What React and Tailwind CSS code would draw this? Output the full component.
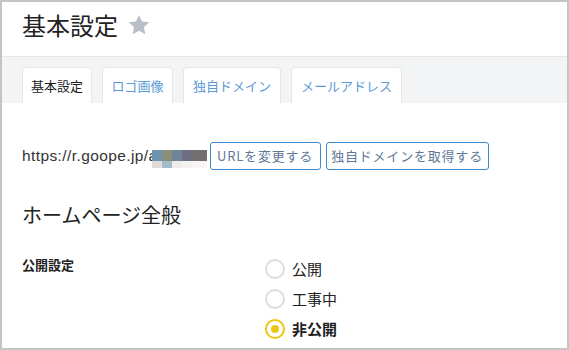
import React from 'react';

const tabs = [
  { label: '基本設定', w: 'w-[70px]', active: true },
  { label: 'ロゴ画像', w: 'w-[71px]' },
  { label: '独自ドメイン', w: 'w-[98px]' },
  { label: 'メールアドレス', w: 'w-[111px]' },
];

const Radio = ({ label, checked }) => (
  <label className="flex items-center h-[30px] gap-[7px]">
    <span
      className={
        checked
          ? 'w-[20px] h-[20px] rounded-full border-2 border-[#edc613] flex items-center justify-center'
          : 'w-[20px] h-[20px] rounded-full border-2 border-[#d9dde3]'
      }
    >
      {checked && <span className="w-[8px] h-[8px] rounded-full bg-[#edc613]" />}
    </span>
    <span className={checked ? 'text-[15px] font-bold text-[#222]' : 'text-[15px] text-[#222]'}>
      {label}
    </span>
  </label>
);

const Mosaic = () => (
  <span className="inline-flex flex-col -ml-[6px] mt-[6px]">
    <span className="flex h-[11px]">
      <span className="w-[10px] bg-[#6c93b0]" />
      <span className="w-[10px] bg-[#8a8f7a]" />
      <span className="w-[10px] bg-[#6f8499]" />
      <span className="w-[10px] bg-[#6f6f82]" />
      <span className="w-[15px] bg-[#736f6f]" />
    </span>
    <span className="flex h-[7px]">
      <span className="w-[10px] bg-[#e0dcd8]" />
      <span className="w-[10px] bg-[#a5bccb]" />
      <span className="w-[10px] bg-[#f0ece8]" />
      <span className="w-[10px] bg-[#f4f2f0]" />
      <span className="w-[15px] bg-[#f8f6f4]" />
    </span>
  </span>
);

export default function App() {
  return (
    <div
      className="w-[569px] h-[350px] border-2 border-[#c4c4c4] bg-white overflow-hidden text-[#222]"
      style={{ fontFamily: '"Noto Sans CJK JP", "Liberation Sans", sans-serif' }}
    >
      {/* header */}
      <div className="h-[55px] flex items-start pt-[10px] px-[20px] gap-[10px] border-b border-[#e8e6de]">
        <h1 className="text-[24px] leading-[26px] text-[#222]">基本設定</h1>
        <svg width="22" height="22" viewBox="0 0 24 24" className="mt-[2px]">
          <path
            d="M12 1l3.3 7.2 7.9.8-5.9 5.4 1.7 7.8L12 18.2 5 22.2l1.7-7.8L.8 9l7.9-.8z"
            fill="#b9bfc9"
          />
        </svg>
      </div>

      {/* tabs */}
      <div className="h-[46px] bg-[#f3f4f6] flex items-end gap-[10px] px-[20px]">
        {tabs.map((t) => (
          <div
            key={t.label}
            className={`${t.w} h-[36px] bg-white border border-b-0 border-[#e6e6e2] rounded-t-[4px] flex items-center justify-center text-[13px] ${
              t.active ? 'text-[#222]' : 'text-[#5a9ad6]'
            }`}
          >
            {t.label}
          </div>
        ))}
      </div>

      {/* body */}
      <div className="px-[20px] pt-[39px]">
        <div className="flex items-center h-[28px]">
          <span
            className="text-[15.5px] tracking-[0.4px] text-[#333]"
            style={{ fontFamily: '"Liberation Sans", sans-serif' }}
          >
            https://r.goope.jp/a
          </span>
          <Mosaic />
          <button className="ml-[3px] w-[111px] h-[28px] border border-[#3d8bd0] rounded-[3px] text-[13px] text-[#62789a] tracking-[0.8px]">
            URLを変更する
          </button>
          <button className="ml-[5px] w-[163px] h-[28px] border border-[#3d8bd0] rounded-[3px] text-[13px] text-[#62789a] tracking-[0.8px]">
            独自ドメインを取得する
          </button>
        </div>

        <h2 className="mt-[32px] text-[20px] leading-[26px] text-[#222]">ホームページ全般</h2>

        <div className="mt-[26px] flex">
          <div className="w-[243px] text-[13px] font-bold pt-[1px]">公開設定</div>
          <div className="flex flex-col mt-[0px]">
            <Radio label="公開" />
            <Radio label="工事中" />
            <Radio label="非公開" checked />
          </div>
        </div>
      </div>
    </div>
  );
}
